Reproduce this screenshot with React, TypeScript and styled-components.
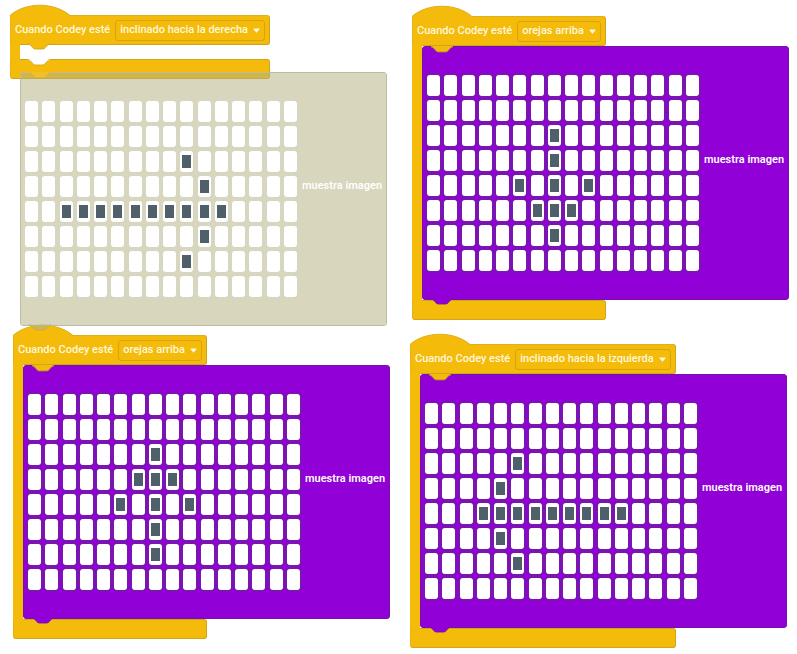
import React from "react";
import styled, { createGlobalStyle, css } from "styled-components";

const YELLOW = "#f4bb0b";
const YELLOW_EDGE = "#d2a41c";
const PURPLE = "#9100d6";
const PURPLE_EDGE = "#7612a8";
const GHOST = "rgba(181, 177, 127, 0.52)";
const GHOST_EDGE = "#bcbba4";
const CREAM = "#fff8dc";

const GlobalStyle = createGlobalStyle`
  *, *::before, *::after { box-sizing: border-box; }
  body {
    margin: 0;
    background: #fff;
    font-family: Roboto, "Liberation Sans", sans-serif;
  }
`;

const Canvas = styled.main`
  position: relative;
  min-height: 100vh;
  overflow: hidden;
`;

/* Blocks are placed freely on the workspace. */
const Placed = styled.section<{ $x: number; $y: number }>`
  position: absolute;
  left: ${(p) => p.$x}px;
  top: ${(p) => p.$y}px;
  width: max-content;
`;

const Dome = styled.svg`
  display: block;
  position: relative;
  width: 60px;
  height: 11px;
  margin-bottom: -1px;
  overflow: visible;
`;

const Header = styled.header`
  display: flex;
  align-items: center;
  gap: 5px;
  height: 30px;
  padding: 0 4px;
  background: ${YELLOW};
  border: 1px solid ${YELLOW_EDGE};
  border-top-color: #deb01a;
  border-left-color: #e6b21a;
  border-radius: 0 3px 3px 0;
`;

const EventLabel = styled.label`
  color: ${CREAM};
  font-size: 11px;
  line-height: 16px;
  font-weight: 500;
  white-space: nowrap;
`;

const SelectBox = styled.span`
  position: relative;
  display: flex;
`;

const Select = styled.select`
  appearance: none;
  height: 21px;
  margin: 0;
  padding: 0 16px 0 4px;
  border: 1px solid #d9a30c;
  border-radius: 3px;
  background: transparent;
  color: ${CREAM};
  font: 500 11px/16px Roboto, "Liberation Sans", sans-serif;
`;

const Arrow = styled.svg`
  position: absolute;
  right: 5px;
  top: 8px;
  width: 7px;
  height: 5px;
  pointer-events: none;
`;

/* The spine of the bracket; it covers the header and foot outlines it joins. */
const Mouth = styled.div`
  position: relative;
  width: 0;
  min-width: 100%;
  min-height: 16px;
  margin: -1px 0;
  padding: 1px 0;
  border-left: 10px solid ${YELLOW};
`;

const Foot = styled.footer`
  height: 20px;
  background: ${YELLOW};
  border: 1px solid ${YELLOW_EDGE};
  border-left-color: #e6b21a;
  border-radius: 0 3px 3px 3px;
`;

const Notch = styled.svg<{ $edge: "top" | "bottom" }>`
  position: absolute;
  z-index: 1;
  left: 8px;
  ${(p) => (p.$edge === "top" ? "top: -1px;" : "top: 100%; margin-top: -1px;")}
  width: 22px;
  height: 6px;
  overflow: visible;
`;

const ImageBlock = styled.div<{ $ghost?: boolean }>`
  position: relative;
  display: flex;
  align-items: center;
  gap: 5px;
  width: max-content;
  height: 254px;
  padding: 0 4px;
  border: 1px solid ${(p) => (p.$ghost ? GHOST_EDGE : PURPLE_EDGE)};
  border-radius: 3px;
  background: ${(p) => (p.$ghost ? GHOST : PURPLE)};
  ${(p) =>
    p.$ghost &&
    css`
      background-clip: padding-box;
    `}
`;

const Matrix = styled.button`
  display: grid;
  grid-template-columns: repeat(16, 13px);
  grid-template-rows: repeat(8, 21px);
  justify-content: space-between;
  align-content: space-between;
  width: 272px;
  height: 196px;
  margin: 0;
  padding: 0;
  border: 0;
  background: none;
  cursor: pointer;
`;

const Led = styled.span<{ $lit: boolean; $ghost?: boolean }>`
  border-radius: 3px;
  background: ${(p) => (p.$lit ? "#50606b" : "#fff")};
  ${(p) =>
    p.$lit &&
    css`
      border: solid #fff;
      border-width: 4px 2px;
    `}
  box-shadow: 0 0 0 2px ${(p) => (p.$ghost ? "#d7d6c0" : "#7b14b2")};
`;

const Caption = styled.span`
  padding-bottom: 26px;
  color: #fff;
  font-size: 11px;
  line-height: 16px;
  font-weight: 600;
  white-space: nowrap;
`;

const NOTCH_PATH =
  "M0 0c2 0 3 1 4 2l4 4c1 1 2 2 4 2h12c2 0 3-1 4-2l4-4c1-1 2-2 4-2";

function NotchShape({ edge, fill, stroke }: { edge: "top" | "bottom"; fill: string; stroke: string }) {
  return (
    <Notch $edge={edge} viewBox="0 -1 36 9" preserveAspectRatio="none" aria-hidden="true">
      {fill !== GHOST && <path d="M0-1h36V1H0z" fill={fill} />}
      <path d={NOTCH_PATH} fill={fill} stroke={stroke} strokeWidth="1.4" />
    </Notch>
  );
}

type Pattern = string[];

const RIGHT: Pattern = [
  "................",
  "................",
  ".........#......",
  "..........#.....",
  "..##########....",
  "..........#.....",
  ".........#......",
  "................",
];

const DOWN: Pattern = [
  "................",
  "................",
  ".......#........",
  ".......#........",
  ".....#.#.#......",
  "......###.......",
  ".......#........",
  "................",
];

const UP: Pattern = [
  "................",
  "................",
  ".......#........",
  "......###.......",
  ".....#.#.#......",
  ".......#........",
  ".......#........",
  "................",
];

const LEFT: Pattern = [
  "................",
  "................",
  ".....#..........",
  "....#...........",
  "...#########....",
  "....#...........",
  ".....#..........",
  "................",
];

function ShowImage({ pattern, ghost }: { pattern: Pattern; ghost?: boolean }) {
  return (
    <ImageBlock $ghost={ghost}>
      <NotchShape edge="top" fill={ghost ? "#f0c02a" : YELLOW} stroke={ghost ? "#cfa83a" : "#a87c50"} />
      <Matrix type="button" aria-label="Editar imagen">
        {pattern.flatMap((row, r) =>
          [...row].map((c, i) => <Led key={`${r}-${i}`} $lit={c === "#"} $ghost={ghost} />)
        )}
      </Matrix>
      <Caption>muestra imagen</Caption>
      <NotchShape edge="bottom" fill={ghost ? GHOST : PURPLE} stroke={ghost ? "#c0a860" : PURPLE_EDGE} />
    </ImageBlock>
  );
}

interface EventProps {
  id: string;
  x: number;
  y: number;
  state: string;
  children?: React.ReactNode;
}

function EventBlock({ id, x, y, state, children }: EventProps) {
  return (
    <Placed $x={x} $y={y}>
      <Dome viewBox="0 0 60 11" aria-hidden="true">
        <path d="M0 12V10.500C15.600-3.200 44-3.200 60 10.500V12z" fill={YELLOW} />
        <path d="M0 10.500C15.600-3.200 44-3.200 60 10.500" fill="none" stroke="#deb01a" />
      </Dome>
      <Header>
        <EventLabel htmlFor={id}>Cuando Codey esté</EventLabel>
        <SelectBox>
          <Select id={id} defaultValue={state}>
            <option>{state}</option>
          </Select>
          <Arrow viewBox="0 0 7 5" aria-hidden="true">
            <path d="M1 .5h5q1 0 .4.800L4 4.300q-.5.500-1 0L.6 1.300Q0 .5 1 .5z" fill={CREAM} />
          </Arrow>
        </SelectBox>
      </Header>
      <Mouth>
        {children ?? (
          <>
            <NotchShape edge="top" fill={YELLOW} stroke={YELLOW_EDGE} />
            <NotchShape edge="bottom" fill="#fff" stroke={YELLOW_EDGE} />
          </>
        )}
      </Mouth>
      <Foot />
    </Placed>
  );
}

export default function App() {
  return (
    <>
      <GlobalStyle />
      <Canvas>
        <EventBlock id="event-right" x={10} y={5} state="inclinado hacia la derecha" />
        <EventBlock id="event-down" x={412} y={6} state="orejas arriba">
          <ShowImage pattern={DOWN} />
        </EventBlock>
        <EventBlock id="event-up" x={13} y={325} state="orejas arriba">
          <ShowImage pattern={UP} />
        </EventBlock>
        <EventBlock id="event-left" x={410} y={334} state="inclinado hacia la izquierda">
          <ShowImage pattern={LEFT} />
        </EventBlock>
        <Placed $x={20} $y={72}>
          <ShowImage pattern={RIGHT} ghost />
        </Placed>
      </Canvas>
    </>
  );
}
